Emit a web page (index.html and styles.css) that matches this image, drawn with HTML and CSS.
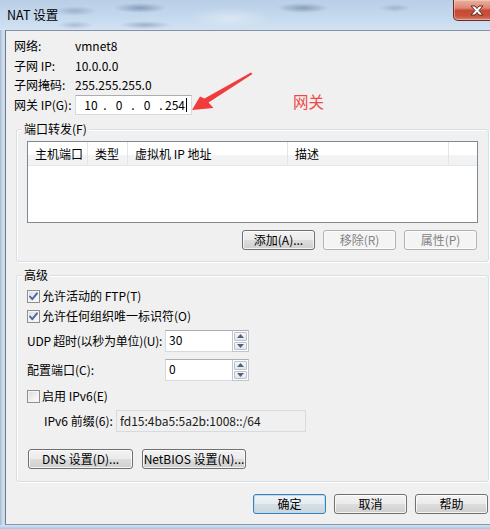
FILE: index.html
```html
<!DOCTYPE html>
<html lang="zh-CN">
<head>
<meta charset="utf-8">
<title>NAT 设置</title>
<link rel="stylesheet" href="styles.css">
</head>
<body>
<div class="window">
  <div class="titlebar">
    <span class="title">NAT 设置</span>
    <div class="close">
      <svg width="16" height="11" viewBox="0 0 16 11"><path d="M2 1 H6 L8 3.5 L10 1 H14 L10 5.5 L14 10 H10 L8 7.5 L6 10 H2 L6 5.5 Z" fill="#fff" stroke="#5b2b24" stroke-width="1"/></svg>
    </div>
  </div>

  <div class="client">
    <div class="info">
      <span>网络:</span><span>vmnet8</span>
      <span>子网 IP:</span><span>10.0.0.0</span>
      <span>子网掩码:</span><span>255.255.255.0</span>
      <span>网关 IP(G):</span>
      <div class="ipbox">
        <span class="oct">10</span><span class="dot">.</span>
        <span class="oct">0</span><span class="dot">.</span>
        <span class="oct">0</span><span class="dot">.</span>
        <span class="oct last">254</span><span class="caret"></span>
      </div>
    </div>

    <div class="group g1">
      <div class="legend">端口转发(F)</div>
      <div class="listview">
        <div class="lv-head">
          <div class="col c1">主机端口</div>
          <div class="col c2">类型</div>
          <div class="col c3">虚拟机 IP 地址</div>
          <div class="col c4">描述</div>
          <div class="col c5"></div>
        </div>
      </div>
      <div class="btnrow">
        <button class="btn">添加(A)...</button>
        <button class="btn disabled">移除(R)</button>
        <button class="btn disabled">属性(P)</button>
      </div>
    </div>

    <div class="group g2">
      <div class="legend">高级</div>
      <div class="checkrow first">
        <span class="cb"><svg width="11" height="11" viewBox="0 0 11 11"><path d="M2 5.5 L4.3 8.2 L9 2.3" fill="none" stroke="#4a64a8" stroke-width="1.9" stroke-linecap="round" stroke-linejoin="round"/></svg></span>
        <span>允许活动的 FTP(T)</span>
      </div>
      <div class="checkrow">
        <span class="cb"><svg width="11" height="11" viewBox="0 0 11 11"><path d="M2 5.5 L4.3 8.2 L9 2.3" fill="none" stroke="#4a64a8" stroke-width="1.9" stroke-linecap="round" stroke-linejoin="round"/></svg></span>
        <span>允许任何组织唯一标识符(O)</span>
      </div>
      <div class="numrow udp">
        <span class="lbl tight">UDP 超时(以秒为单位)(U):</span>
        <div class="spin">
          <div class="field">30</div>
          <div class="spinner">
            <div class="sbtn"><svg width="7" height="4" viewBox="0 0 7 4"><path d="M0 4 L3.5 0 L7 4 Z" fill="#4d6185"/></svg></div>
            <div class="sbtn"><svg width="7" height="4" viewBox="0 0 7 4"><path d="M0 0 L3.5 4 L7 0 Z" fill="#4d6185"/></svg></div>
          </div>
        </div>
      </div>
      <div class="numrow cfg">
        <span class="lbl">配置端口(C):</span>
        <div class="spin">
          <div class="field">0</div>
          <div class="spinner">
            <div class="sbtn"><svg width="7" height="4" viewBox="0 0 7 4"><path d="M0 4 L3.5 0 L7 4 Z" fill="#4d6185"/></svg></div>
            <div class="sbtn"><svg width="7" height="4" viewBox="0 0 7 4"><path d="M0 0 L3.5 4 L7 0 Z" fill="#4d6185"/></svg></div>
          </div>
        </div>
      </div>
      <div class="checkrow ipv6cb">
        <span class="cb"></span>
        <span>启用 IPv6(E)</span>
      </div>
      <div class="v6row">
        <span class="lbl">IPv6 前缀(6):</span>
        <div class="rofield">fd15:4ba5:5a2b:1008::/64</div>
      </div>
      <div class="dnsrow">
        <button class="btn dns">DNS 设置(D)...</button>
        <button class="btn netbios">NetBIOS 设置(N)...</button>
      </div>
    </div>

    <div class="dlgbtns">
      <button class="btn default">确定</button>
      <button class="btn">取消</button>
      <button class="btn">帮助</button>
    </div>
  </div>
  <div class="bottomframe"></div>

  <svg class="arrow" width="490" height="529" viewBox="0 0 490 529">
    <polygon points="192,110 200,96.5 204.5,98.5 251,72.5 252.5,74 208.5,102.5 213.5,108" fill="#f23b3b"/>
  </svg>
  <div class="annot">网关</div>
</div>
</body>
</html>
```

FILE: styles.css
```css
* { box-sizing: border-box; }
html, body { margin: 0; padding: 0; }
body {
  width: 490px;
  height: 529px;
  overflow: hidden;
  font-family: "Noto Sans CJK SC", "Liberation Sans", sans-serif;
  font-size: 12px;
  color: #000;
  background: #bcd0e6;
}
.window {
  position: relative;
  width: 490px;
  height: 529px;
  overflow: hidden;
  display: flex;
  flex-direction: column;
  background: linear-gradient(to right, #9fb5cf 0, #c9d7e7 2px, #d3dfec 4px, #c3d2e3 5px);
}

/* title bar */
.titlebar {
  flex: none;
  height: 30px;
  display: flex;
  justify-content: space-between;
  align-items: flex-start;
  padding-left: 7px;
  background:
    radial-gradient(ellipse 22px 5px at 75px 11px, rgba(90,110,140,.35), transparent),
    radial-gradient(ellipse 26px 5px at 140px 8px, rgba(70,90,125,.45), transparent),
    radial-gradient(ellipse 18px 4px at 75px 25px, rgba(90,110,140,.3), transparent),
    radial-gradient(ellipse 26px 4px at 145px 25px, rgba(70,90,125,.35), transparent),
    radial-gradient(ellipse 26px 5px at 303px 8px, rgba(70,90,125,.45), transparent),
    radial-gradient(ellipse 16px 4px at 395px 8px, rgba(90,110,140,.3), transparent),
    radial-gradient(ellipse 40px 10px at 230px 18px, rgba(255,255,255,.35), transparent),
    linear-gradient(#b9cfe7 0%, #c6daee 60%, #d2e2f2 100%);
}
.title {
  align-self: center;
  font-size: 12.5px;
  line-height: 30px;
  color: #000;
}
.close {
  width: 44px;
  height: 21px;
  margin-right: -7px;
  border: 1px solid #6a2c25;
  border-top: none;
  border-radius: 0 0 0 5px;
  background: linear-gradient(#eab2a4 0%, #dc8670 40%, #c84a32 52%, #c9523a 80%, #d9826b 100%);
  box-shadow: inset 0 0 0 1px rgba(255,220,210,.45);
  display: flex;
  align-items: center;
  padding-left: 15px;
}
.close svg { display: block; }

/* client area */
.client {
  flex: none;
  height: 495px;
  margin-left: 5px;
  border-left: 1px solid #6c7b8e;
  border-top: 1px solid #8293a8;
  border-bottom: 1px solid #8797ab;
  background: #f0f0f0;
  display: flex;
  flex-direction: column;
}
.bottomframe {
  flex: 1;
  background: linear-gradient(#d6e5f4, #a8c4e3);
}

.info {
  display: grid;
  grid-template-columns: 61px auto;
  grid-template-rows: 20px 19px 20px 20px;
  align-items: center;
  margin: 5px 0 0 8px;
  line-height: 16px;
}
.ipbox {
  width: 117px;
  height: 20px;
  background: #fff;
  border: 1px solid #d5d9e0;
  border-top-color: #abadb3;
  display: flex;
  align-items: center;
  padding-left: 5px;
}
.oct { width: 20px; text-align: center; }
.oct.last { text-align: right; }
.dot { width: 8px; text-align: center; }
.caret { width: 1px; height: 14px; background: #000; margin-left: 1px; }

/* group boxes */
.group {
  margin: 14px 1px 0 10px;
  border: 1px solid #d5dfe5;
  border-radius: 3px;
  box-shadow: inset 1px 1px 0 #fff, 1px 1px 0 #fff;
  padding: 0 10px 11px;
}
.g2 { margin-top: 13px; padding-bottom: 12px; }
.legend {
  width: fit-content;
  height: 16px;
  line-height: 16px;
  margin: -9px 0 0 -5px;
  padding: 0 2px;
  background: #f0f0f0;
}

/* list view */
.listview {
  margin-top: 4px;
  height: 82px;
  border: 1px solid #828790;
  background: #fff;
}
.lv-head {
  display: flex;
  height: 24px;
  background: linear-gradient(#ffffff 0%, #ffffff 55%, #f3f4f6 55%, #f1f2f4 100%);
  border-bottom: 1px solid #e5e7ea;
}
.col {
  height: 100%;
  border-right: 1px solid #e3e5e8;
  padding-left: 7px;
  line-height: 24px;
  white-space: nowrap;
}
.c1 { width: 60px; }
.c2 { width: 40px; }
.c3 { width: 160px; }
.c4 { width: 161px; }
.c5 { flex: 1; border-right: none; }

/* buttons */
.btnrow {
  margin-top: 7px;
  display: flex;
  justify-content: flex-end;
  gap: 8px;
  padding-right: 1px;
}
.btn {
  width: 73px;
  height: 20px;
  padding: 0;
  font: inherit;
  color: #000;
  line-height: 16px;
  border: 1px solid #707070;
  border-radius: 3px;
  background: linear-gradient(#f2f2f2 0%, #ebebeb 48%, #dddddd 52%, #cfcfcf 100%);
  box-shadow: inset 0 0 0 1px rgba(255,255,255,.75);
  display: flex;
  align-items: center;
  justify-content: center;
  white-space: nowrap;
}
.btn.disabled {
  color: #838383;
  border-color: #adb2b5;
  background: #f4f4f4;
  box-shadow: inset 0 0 0 1px #fcfcfc;
}
.btn.default {
  border-color: #3c7fb1;
  background: linear-gradient(#eef3f6 0%, #e6edf2 48%, #d6dfe6 52%, #cbd6de 100%);
  box-shadow: inset 0 0 0 1px #b9dcf0;
}

/* advanced */
.checkrow {
  height: 20px;
  display: flex;
  align-items: center;
  gap: 2px;
  line-height: 16px;
}
.checkrow.first { margin-top: 3px; }
.checkrow.ipv6cb { margin-top: 5px; }
.cb {
  width: 13px;
  height: 13px;
  flex: none;
  border: 1px solid #8e8f8f;
  background: linear-gradient(135deg, #dadada 0%, #f2f2f2 60%, #fbfbfb 100%);
  box-shadow: inset 0 0 0 1px #f4f4f4;
  display: flex;
  align-items: center;
  justify-content: center;
}
.cb svg { display: block; }

.numrow {
  display: grid;
  grid-template-columns: 138px 84px;
  align-items: center;
  height: 22px;
  line-height: 16px;
  white-space: nowrap;
}
.numrow.udp { margin-top: 4px; }
.numrow.cfg { margin-top: 7px; }
.lbl.tight { letter-spacing: -0.25px; }
.spin {
  display: flex;
  height: 22px;
}
.field {
  flex: 1;
  background: #fff;
  border: 1px solid #d5d9e0;
  border-top-color: #abadb3;
  border-right: none;
  padding-left: 3px;
  line-height: 18px;
}
.spinner {
  width: 17px;
  display: flex;
  flex-direction: column;
  border: 1px solid #c2c6cc;
  border-top-color: #abadb3;
  background: #fff;
  padding: 1px;
  gap: 1px;
}
.sbtn {
  flex: 1;
  border: 1px solid #bcc2c9;
  border-radius: 1px;
  background: linear-gradient(#f6f6f6, #e3e6ea);
  display: flex;
  align-items: center;
  justify-content: center;
}
.sbtn svg { display: block; }

.v6row {
  margin-top: 4px;
  height: 22px;
  display: flex;
  align-items: center;
  padding-left: 17px;
  line-height: 16px;
}
.v6row .lbl { width: 72px; white-space: nowrap; }
.rofield {
  width: 190px;
  height: 22px;
  border: 1px solid #d5dbe2;
  background: #f0f0f0;
  padding-left: 3px;
  line-height: 19px;
  color: #1a1a1a;
}

.dnsrow {
  margin-top: 17px;
  display: flex;
  gap: 9px;
  padding-left: 1px;
}
.btn.dns { width: 105px; }
.btn.netbios { width: 104px; }

.dlgbtns {
  margin-top: 12px;
  display: flex;
  justify-content: flex-end;
  gap: 8px;
  padding-right: 2px;
}

/* annotation overlay */
.arrow {
  position: absolute;
  left: 0;
  top: 0;
  pointer-events: none;
}
.annot {
  position: absolute;
  left: 293px;
  top: 92px;
  font-size: 15.5px;
  line-height: 18px;
  color: #f04848;
}
```
